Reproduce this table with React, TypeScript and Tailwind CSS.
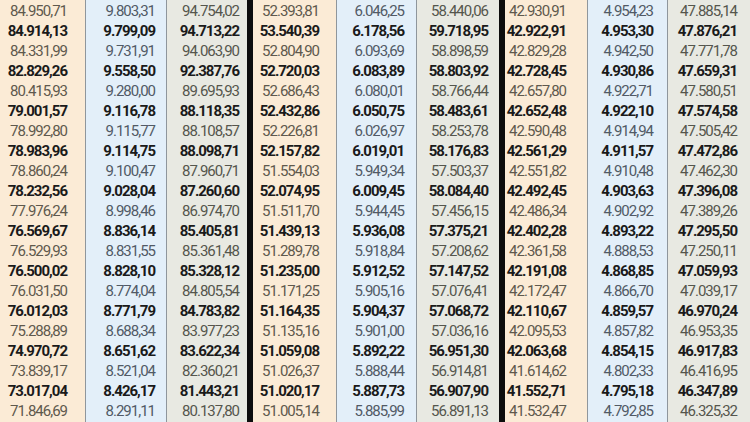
const cols: { w: string; pr: string; bg: string; muted: string; border: string; values: string[] }[] = [
  {
    w: "w-[86px]", pr: "pr-[18px]", bg: "bg-[#fbebd6]", muted: "text-[#5f594d]", border: "border-r border-[#8f969c]",
    values: ["84.950,71", "84.914,13", "84.331,99", "82.829,26", "80.415,93", "79.001,57", "78.992,80", "78.983,96", "78.860,24", "78.232,56", "77.976,24", "76.569,67", "76.529,93", "76.500,02", "76.031,50", "76.012,03", "75.288,89", "74.970,72", "73.839,17", "73.017,04", "71.846,69"],
  },
  {
    w: "w-[81px]", pr: "pr-[11px]", bg: "bg-[#e3eff9]", muted: "text-[#515a66]", border: "border-r border-[#8f969c]",
    values: ["9.803,31", "9.799,09", "9.731,91", "9.558,50", "9.280,00", "9.116,78", "9.115,77", "9.114,75", "9.100,47", "9.028,04", "8.998,46", "8.836,14", "8.831,55", "8.828,10", "8.774,04", "8.771,79", "8.688,34", "8.651,62", "8.521,04", "8.426,17", "8.291,11"],
  },
  {
    w: "w-[86px]", pr: "pr-[8px]", bg: "bg-[#e8e9e2]", muted: "text-[#55564d]", border: "border-r-[6px] border-[#0d0d0d]",
    values: ["94.754,02", "94.713,22", "94.063,90", "92.387,76", "89.695,93", "88.118,35", "88.108,57", "88.098,71", "87.960,71", "87.260,60", "86.974,70", "85.405,81", "85.361,48", "85.328,12", "84.805,54", "84.783,82", "83.977,23", "83.622,34", "82.360,21", "81.443,21", "80.137,80"],
  },
  {
    w: "w-[84px]", pr: "pr-[17px]", bg: "bg-[#fbebd6]", muted: "text-[#5f594d]", border: "border-r border-[#8f969c]",
    values: ["52.393,81", "53.540,39", "52.804,90", "52.720,03", "52.686,43", "52.432,86", "52.226,81", "52.157,82", "51.554,03", "52.074,95", "51.511,70", "51.439,13", "51.289,78", "51.235,00", "51.171,25", "51.164,35", "51.135,16", "51.059,08", "51.026,37", "51.020,17", "51.005,14"],
  },
  {
    w: "w-[80px]", pr: "pr-[12px]", bg: "bg-[#e3eff9]", muted: "text-[#515a66]", border: "border-r border-[#8f969c]",
    values: ["6.046,25", "6.178,56", "6.093,69", "6.083,89", "6.080,01", "6.050,75", "6.026,97", "6.019,01", "5.949,34", "6.009,45", "5.944,45", "5.936,08", "5.918,84", "5.912,52", "5.905,16", "5.904,37", "5.901,00", "5.892,22", "5.888,44", "5.887,73", "5.885,99"],
  },
  {
    w: "w-[88px]", pr: "pr-[11px]", bg: "bg-[#e8e9e2]", muted: "text-[#55564d]", border: "border-r-[6px] border-[#0d0d0d]",
    values: ["58.440,06", "59.718,95", "58.898,59", "58.803,92", "58.766,44", "58.483,61", "58.253,78", "58.176,83", "57.503,37", "58.084,40", "57.456,15", "57.375,21", "57.208,62", "57.147,52", "57.076,41", "57.068,72", "57.036,16", "56.951,30", "56.914,81", "56.907,90", "56.891,13"],
  },
  {
    w: "w-[83px]", pr: "pr-[21px]", bg: "bg-[#fbebd6]", muted: "text-[#5f594d]", border: "border-r border-[#8f969c]",
    values: ["42.930,91", "42.922,91", "42.829,28", "42.728,45", "42.657,80", "42.652,48", "42.590,48", "42.561,29", "42.551,82", "42.492,45", "42.486,34", "42.402,28", "42.361,58", "42.191,08", "42.172,47", "42.110,67", "42.095,53", "42.063,68", "41.614,62", "41.552,71", "41.532,47"],
  },
  {
    w: "w-[80px]", pr: "pr-[14px]", bg: "bg-[#e3eff9]", muted: "text-[#515a66]", border: "border-r border-[#8f969c]",
    values: ["4.954,23", "4.953,30", "4.942,50", "4.930,86", "4.922,71", "4.922,10", "4.914,94", "4.911,57", "4.910,48", "4.903,63", "4.902,92", "4.893,22", "4.888,53", "4.868,85", "4.866,70", "4.859,57", "4.857,82", "4.854,15", "4.802,33", "4.795,18", "4.792,85"],
  },
  {
    w: "w-[82px]", pr: "pr-[13px]", bg: "bg-[#e8e9e2]", muted: "text-[#55564d]", border: "",
    values: ["47.885,14", "47.876,21", "47.771,78", "47.659,31", "47.580,51", "47.574,58", "47.505,42", "47.472,86", "47.462,30", "47.396,08", "47.389,26", "47.295,50", "47.250,11", "47.059,93", "47.039,17", "46.970,24", "46.953,35", "46.917,83", "46.416,95", "46.347,89", "46.325,32"],
  },
];

export default function App() {
  return (
    <div className="w-[750px] h-[422px] overflow-hidden bg-[#f3f2ee] flex font-['Roboto',sans-serif] text-[15px] tracking-[-1px]">
      {cols.map((col, ci) => (
        <div key={ci} className={`${col.w} ${col.bg} ${col.border} shrink-0 flex flex-col pt-[1px]`}>
          {col.values.map((v, ri) => (
            <div
              key={ri}
              className={`h-[20px] leading-[20px] text-right ${col.pr} ${
                ri % 2 === 1 ? "font-bold text-[#1a1a1a]" : col.muted
              }`}
            >
              {v}
            </div>
          ))}
        </div>
      ))}
    </div>
  );
}
